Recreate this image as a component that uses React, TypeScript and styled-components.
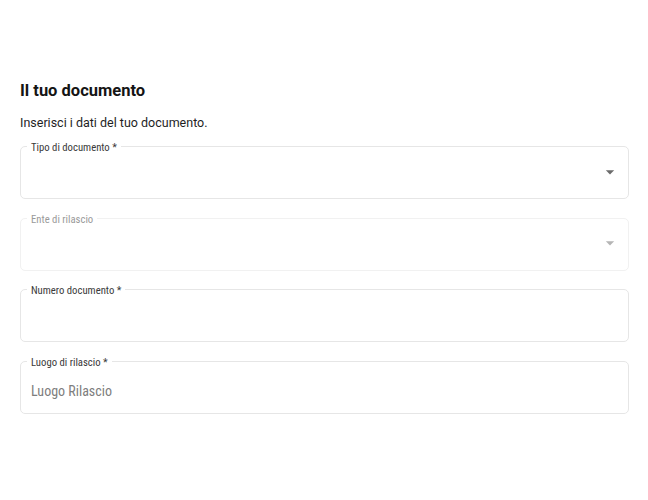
import { FC } from 'react';
import { styled, createGlobalStyle } from 'styled-components';

const GlobalStyle = createGlobalStyle`
  html, body {
    margin: 0;
    padding: 0;
    background: #ffffff;
  }
  body {
    font-family: Roboto, "Liberation Sans", sans-serif;
    font-stretch: 80%;
    color: #1a1a1a;
  }
`;

const Page = styled.main`
  display: flex;
  flex-direction: column;
  padding: 81px 19px 0 20px;
`;

const Title = styled.h2`
  margin: 0;
  font-size: 16.5px;
  font-stretch: 90%;
  line-height: 20px;
  font-weight: 700;
  color: #141414;
`;

const Subtitle = styled.p`
  margin: 14px 0 0;
  font-size: 12.5px;
  font-stretch: 90%;
  line-height: 16px;
  color: #1f1f1f;
`;

const Fields = styled.div`
  display: flex;
  flex-direction: column;
  gap: 18.7px;
  margin-top: 15px;
`;

const Field = styled.div<{ $disabled?: boolean }>`
  position: relative;
  height: 53px;
  border: 1px solid ${(p) => (p.$disabled ? '#f1f1f1' : '#e6e6e6')};
  border-radius: 5px;
  box-sizing: border-box;
  display: flex;
  align-items: center;
  padding: 6px 8px 0 10px;
`;

const Legend = styled.span<{ $disabled?: boolean }>`
  position: absolute;
  top: -5px;
  left: 6px;
  padding: 0 4px;
  background: #ffffff;
  font-size: 10.7px;
  line-height: 11px;
  color: ${(p) => (p.$disabled ? '#9a9a9a' : '#3a3a3a')};
`;

const Value = styled.span`
  flex: 1;
  font-size: 14px;
  color: #7d7d7d;
`;

const Arrow = styled.svg<{ $disabled?: boolean }>`
  width: 20px;
  height: 20px;
  margin-top: -8px;
  fill: ${(p) => (p.$disabled ? '#b5b5b5' : '#6b6b6b')};
`;

const DropArrow: FC<{ disabled?: boolean }> = ({ disabled }) => (
  <Arrow $disabled={disabled} viewBox="0 0 24 24">
    <path d="M7 10l5 5 5-5z" />
  </Arrow>
);

type FieldDef = {
  label: string;
  select?: boolean;
  disabled?: boolean;
  placeholder?: string;
};

const fields: FieldDef[] = [
  { label: 'Tipo di documento *', select: true },
  { label: 'Ente di rilascio', select: true, disabled: true },
  { label: 'Numero documento *' },
  { label: 'Luogo di rilascio *', placeholder: 'Luogo Rilascio' },
];

export default function App() {
  return (
    <>
      <GlobalStyle />
      <Page>
        <Title>Il tuo documento</Title>
        <Subtitle>Inserisci i dati del tuo documento.</Subtitle>
        <Fields>
          {fields.map((f) => (
            <Field key={f.label} $disabled={f.disabled}>
              <Legend $disabled={f.disabled}>{f.label}</Legend>
              <Value>{f.placeholder}</Value>
              {f.select && <DropArrow disabled={f.disabled} />}
            </Field>
          ))}
        </Fields>
      </Page>
    </>
  );
}
